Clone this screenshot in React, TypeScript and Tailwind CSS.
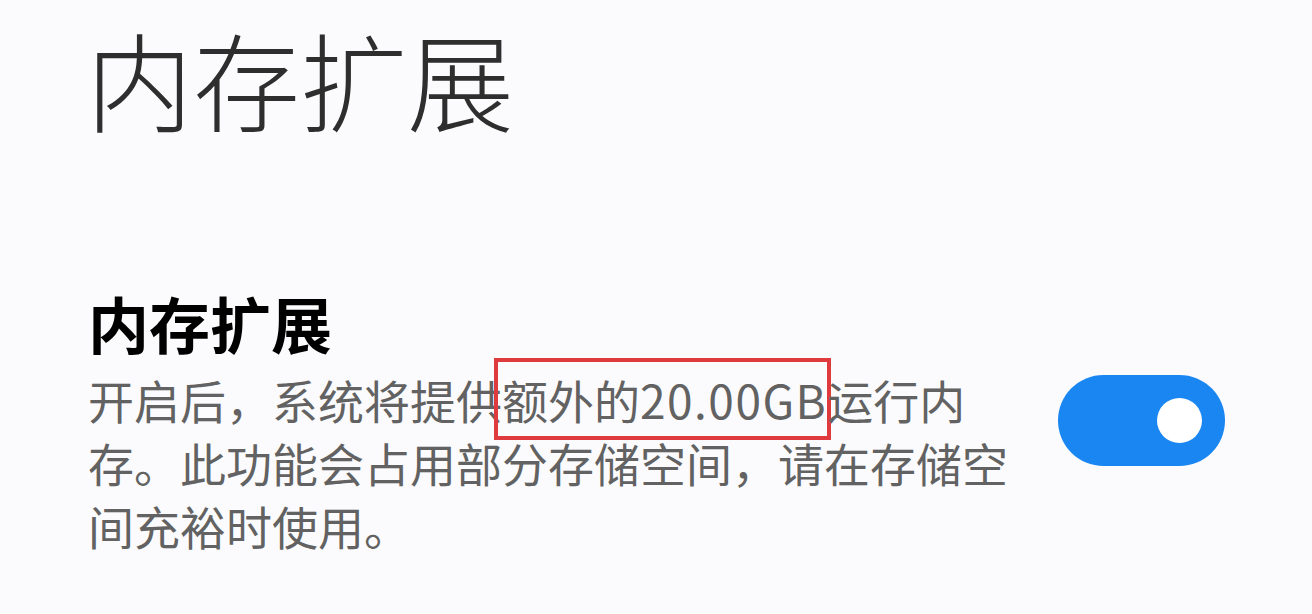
import { useState } from "react";

const cjk = "font-['Noto_Sans_CJK_SC','Noto_Sans',sans-serif]";

function Toggle({ on, onChange }: { on: boolean; onChange: () => void }) {
  return (
    <button
      onClick={onChange}
      className={`flex h-[91px] w-[167px] shrink-0 items-center rounded-full px-[23px] ${
        on ? "justify-end bg-[#1a86f2]" : "justify-start bg-[#d8d8dc]"
      }`}
    >
      <span className="block h-[45px] w-[45px] rounded-full bg-white" />
    </button>
  );
}

export default function App() {
  const [enabled, setEnabled] = useState(true);

  return (
    <div className={`h-[614px] w-[1312px] overflow-hidden bg-[#fbfbfd] ${cjk}`}>
      <h1 className="pl-[86px] pt-[18px] text-[107px] font-light leading-[120px] text-[#2e2e2e]">
        内存扩展
      </h1>

      <div className="mt-[150px] flex items-start justify-between pl-[88px] pr-[87px]">
        <div className="w-[925px]">
          <h2 className="text-[61px] font-bold leading-[70px] text-black">内存扩展</h2>
          <p className="mt-[10px] text-[46px] leading-[63px] text-[#626262]">
            开启后，系统将提供
            <span className="-ml-[8px] -mr-[4px] border-[4px] border-[#df3a3d] py-[4px] pl-[4px]">
              额外的<span className="tracking-[1.5px]">20.00GB</span>
            </span>
            运行内存。此功能会占用部分存储空间，请在存储空间充裕时使用。
          </p>
        </div>
        <div className="mt-[87px]">
          <Toggle on={enabled} onChange={() => setEnabled((v) => !v)} />
        </div>
      </div>
    </div>
  );
}
